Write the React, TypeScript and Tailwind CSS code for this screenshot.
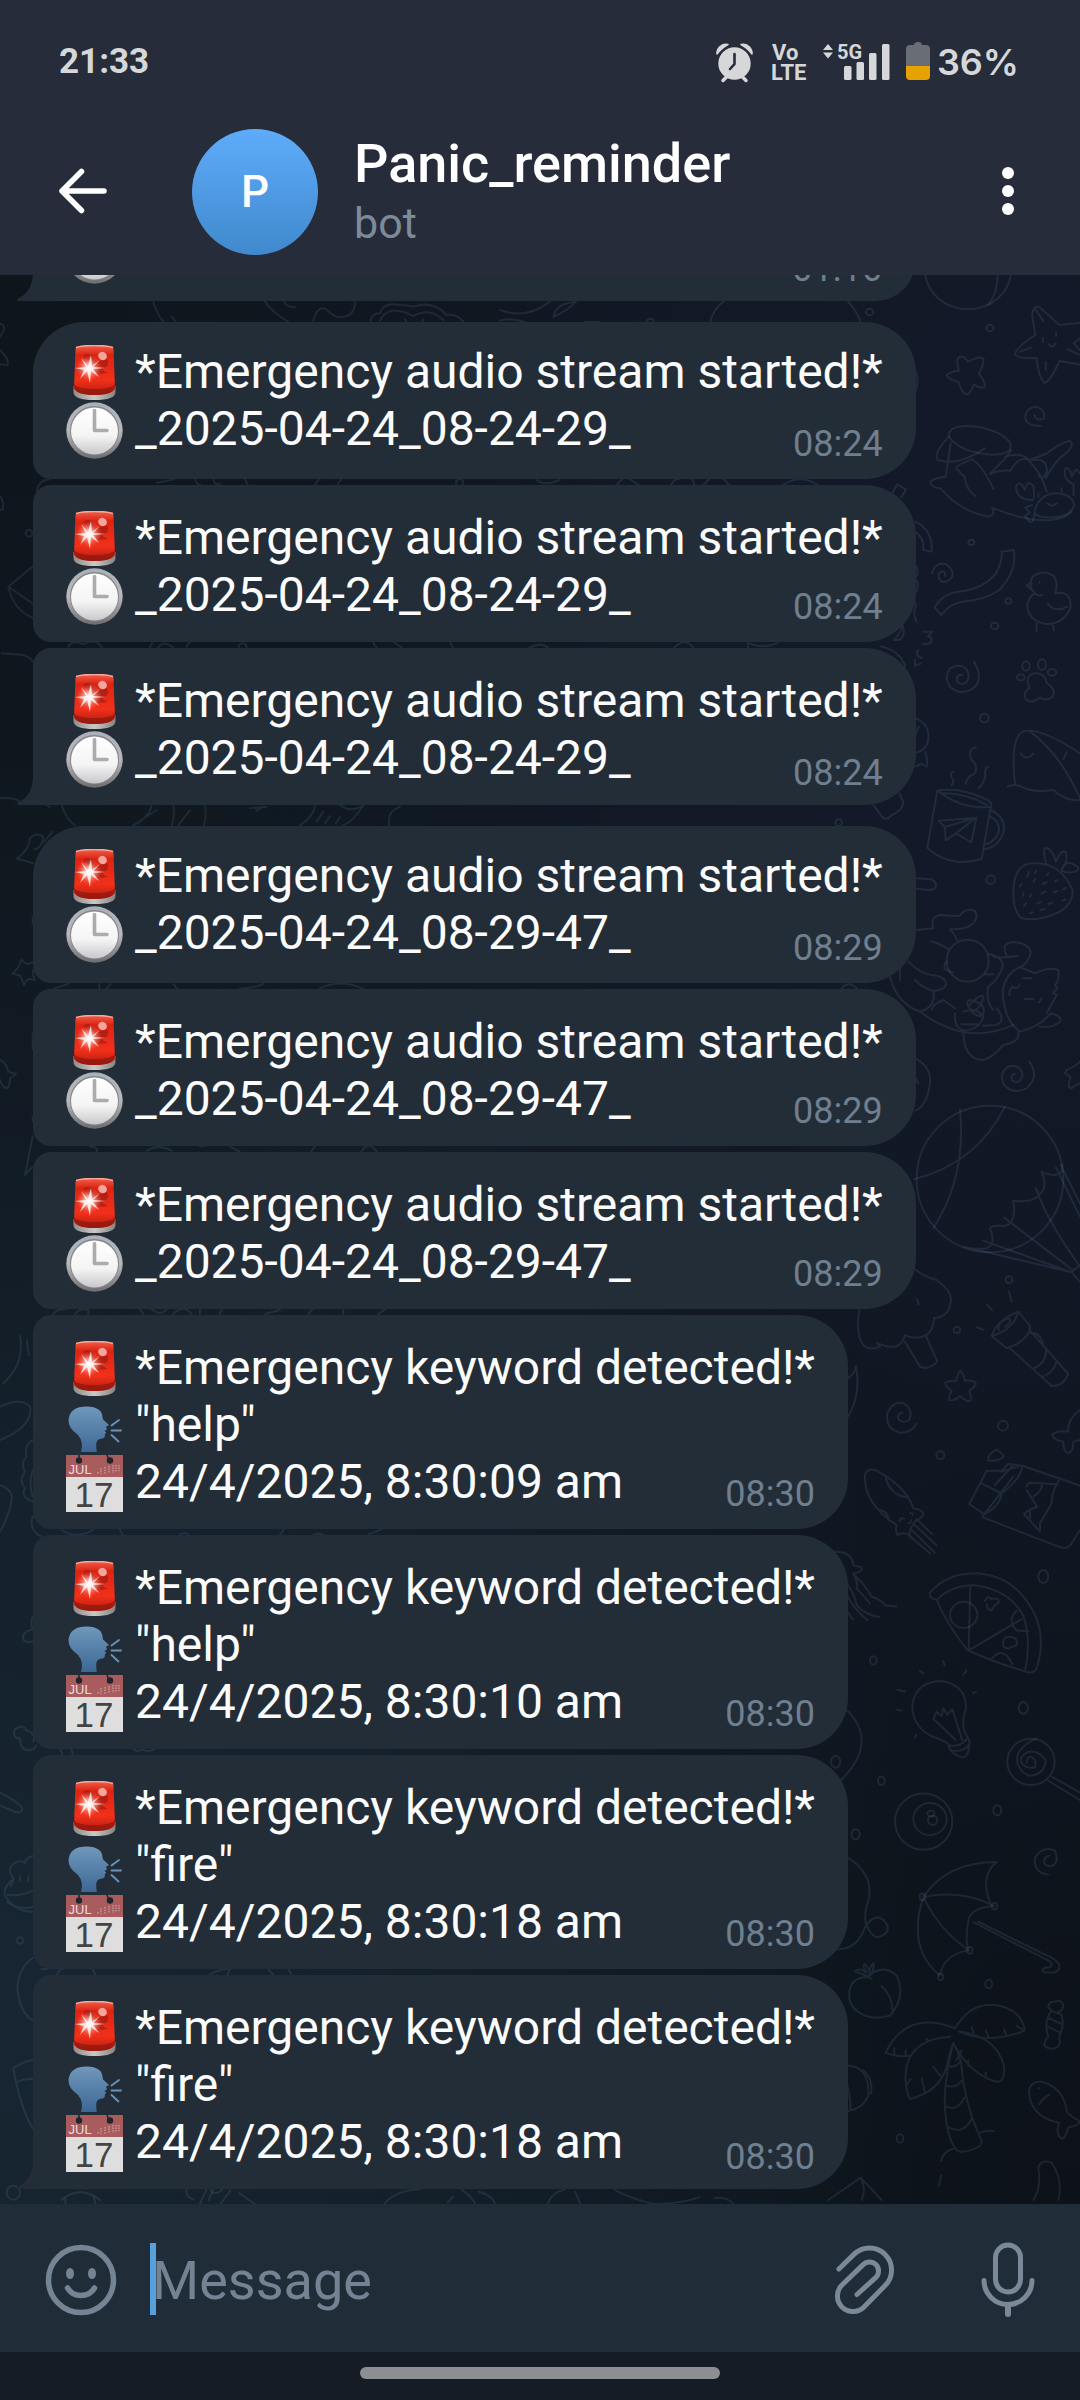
import type { ReactNode } from "react";

type Glyph = "siren" | "clock" | "speaker" | "calendar";
type Line = { glyph: Glyph; text: string };
type Message = { lines: Line[]; time: string; first?: boolean; last?: boolean };

const stream = (stamp: string): Line[] => [
  { glyph: "siren", text: "*Emergency audio stream started!*" },
  { glyph: "clock", text: stamp },
];

const keyword = (word: string, date: string): Line[] => [
  { glyph: "siren", text: "*Emergency keyword detected!*" },
  { glyph: "speaker", text: `"${word}"` },
  { glyph: "calendar", text: date },
];

const messages: Message[] = [
  { lines: stream("_2025-04-24_08-24-29_"), time: "08:24", first: true },
  { lines: stream("_2025-04-24_08-24-29_"), time: "08:24" },
  { lines: stream("_2025-04-24_08-24-29_"), time: "08:24", last: true },
  { lines: stream("_2025-04-24_08-29-47_"), time: "08:29", first: true },
  { lines: stream("_2025-04-24_08-29-47_"), time: "08:29" },
  { lines: stream("_2025-04-24_08-29-47_"), time: "08:29" },
  { lines: keyword("help", "24/4/2025, 8:30:09 am"), time: "08:30" },
  { lines: keyword("help", "24/4/2025, 8:30:10 am"), time: "08:30" },
  { lines: keyword("fire", "24/4/2025, 8:30:18 am"), time: "08:30" },
  { lines: keyword("fire", "24/4/2025, 8:30:18 am"), time: "08:30", last: true },
];

function EmojiDefs() {
  return (
    <svg className="absolute size-0" aria-hidden="true">
      <defs>
        <linearGradient id="sirenRed" x1="0" y1="0" x2="0" y2="1">
          <stop offset="0" stopColor="#f0604a" />
          <stop offset="0.2" stopColor="#dc2413" />
          <stop offset="0.7" stopColor="#f2301a" />
          <stop offset="1" stopColor="#b01c10" />
        </linearGradient>
        <radialGradient id="sirenGlow">
          <stop offset="0" stopColor="#ffffff" />
          <stop offset="0.4" stopColor="#ffb9ae" stopOpacity="0.75" />
          <stop offset="1" stopColor="#ff5a40" stopOpacity="0" />
        </radialGradient>
        <linearGradient id="sirenBase" x1="0" y1="0" x2="1" y2="0">
          <stop offset="0" stopColor="#8f8d8a" />
          <stop offset="0.5" stopColor="#cbc9c5" />
          <stop offset="1" stopColor="#858380" />
        </linearGradient>
        <linearGradient id="clockRim" x1="0" y1="0" x2="0" y2="1">
          <stop offset="0" stopColor="#a9b0b8" />
          <stop offset="0.5" stopColor="#b9b9bb" />
          <stop offset="1" stopColor="#6d6d6f" />
        </linearGradient>
        <linearGradient id="clockFace" x1="0" y1="0" x2="0" y2="1">
          <stop offset="0" stopColor="#ffffff" />
          <stop offset="0.6" stopColor="#f4f4f5" />
          <stop offset="1" stopColor="#c9c9cc" />
        </linearGradient>
        <linearGradient id="headBlue" x1="0" y1="0" x2="0" y2="1">
          <stop offset="0" stopColor="#7098bb" />
          <stop offset="1" stopColor="#3d6796" />
        </linearGradient>
      </defs>
    </svg>
  );
}

function Emoji({ glyph }: { glyph: Glyph }) {
  const drawings: Record<Glyph, ReactNode> = {
    siren: (
      <g transform="translate(0 -2)">
        <path d="M7.500 43 h42 v6 q0 8 -21 8 t-21 -8z" fill="url(#sirenBase)" />
        <path d="M9.500 6 q0-4 19-4 t19 4 l1.500 39 q-2 7 -20.500 7 t-20.500 -7z" fill="url(#sirenRed)" />
        <path d="M8.200 41 q3 5 20.300 5 t20.300 -5 v4 q-3 7 -20.300 7 t-20.300 -7z" fill="#8e170f" opacity="0.7" />
        <path d="M10 4.500 q6-2 18.500-2 t18.500 2" stroke="#f9a79a" strokeWidth="1.500" fill="none" />
        <path d="M17 13 q5-4 9 0 l5 6 10 -3 q4 6 -5 11 l6 3 -10 1z" fill="#8f1710" opacity="0.55" />
        <ellipse cx="36.500" cy="13" rx="4.500" ry="4" fill="#f3a69e" transform="rotate(30 36.500 13)" />
        <circle cx="23" cy="25" r="13" fill="url(#sirenGlow)" />
        <path d="M9 25 l11-1 -5-9 7 8 3-11 1 11 8-6 -7 7 13 1 -13 1 6 8 -8 -6 -1 12 -3 -12 -7 8 4-9z" fill="#fff" opacity="0.8" />
      </g>
    ),
    clock: (
      <>
        <circle cx="28.500" cy="28.500" r="28.200" fill="url(#clockRim)" />
        <circle cx="28.500" cy="28.500" r="24.500" fill="#85868a" />
        <circle cx="28.500" cy="29" r="23.500" fill="url(#clockFace)" />
        <path d="M28.500 8.500 v20 h12.500" stroke="#abacae" strokeWidth="3.600" strokeLinecap="round" strokeLinejoin="round" fill="none" />
      </>
    ),
    speaker: (
      <g transform="translate(0 -1)">
        <path d="M15 55 q3-10-3-17 Q2 31 2.500 22.500 Q4 9.500 21 9.500 Q36 10 36.500 20 l.5 2.500 5.500 5 q.5 1.500 -2.500 1.800 l1 3 -2.500 1.700 1.800 1.500 -1.500 2 q1 4 -5 4.500 q-5 .5 -3 13z" fill="url(#headBlue)" />
        <path d="M45.500 28.500 l7.500-5.500 M45.500 33.500 h9.500 M45.500 38 l7 6.500" stroke="#6795bd" strokeWidth="1.800" strokeLinecap="round" fill="none" />
      </g>
    ),
    calendar: (
      <>
        <path d="M0 0 h57 v57 h-57z" fill="#dededf" />
        <path d="M0 0 h57 v22 h-57z" fill="#a95c5d" />
        <path d="M13 0 l0 5 M41 0 l2 5" stroke="#1e252e" strokeWidth="1.500" />
        <circle cx="13" cy="5.500" r="3.200" fill="#1e252e" />
        <circle cx="44" cy="5.500" r="3.200" fill="#1e252e" />
        <path d="M32 17 v2 M35 13 v6 M39 12 v7 M43 11 v7 M47 10 v8 M50 10 v7 M53 10 v6" stroke="#c99393" strokeWidth="1.500" strokeDasharray="1.500 1" />
        <text x="2.500" y="19" fontSize="13" fill="#eedede" fontFamily="Liberation Sans, sans-serif">JUL</text>
        <text x="28" y="51.500" fontSize="35" fill="#444444" textAnchor="middle" fontFamily="Liberation Sans, sans-serif">17</text>
      </>
    ),
  };
  return (
    <svg viewBox="0 0 57 57" className="mt-1 size-[57px] shrink-0" aria-hidden="true">
      {drawings[glyph]}
    </svg>
  );
}

function Tail() {
  return (
    <svg viewBox="0 0 17 30" className="absolute bottom-0 -left-4 h-[30px] w-[17px]" aria-hidden="true">
      <path d="M17 0 H16 Q16 20 2 27 Q-1 29 1 30 H17z" fill="#222d38" />
    </svg>
  );
}

function Bubble({ message }: { message: Message }) {
  const { lines, time, first, last } = message;
  return (
    <li
      className={`relative grid w-fit rounded-r-[51px] bg-[#222d38] px-[33px] ${first ? "mt-[15px] rounded-tl-[51px]" : "rounded-tl-[18px]"} ${last ? "" : "rounded-bl-[18px]"}`}
    >
      <div className={`col-start-1 row-start-1 ${first ? "pt-[21px] pb-[22px]" : "pt-6 pb-[19px]"}`}>
        {lines.map((line) => (
          <p key={line.glyph} className="flex h-[57px] items-center gap-3 text-5xl leading-[57px] whitespace-nowrap text-[#fbfbfc]">
            <Emoji glyph={line.glyph} />
            {line.text}
          </p>
        ))}
      </div>
      <time className={`col-start-1 row-start-1 self-end justify-self-end text-4xl leading-[42px] text-[#6f7f8f] ${last ? "mb-[11px]" : "mb-[14px]"}`}>
        {time}
      </time>
      {last && <Tail />}
    </li>
  );
}

/* The lower edge of an older message that is scrolled out of view. */
function ScrolledBubble({ time }: { time: string }) {
  return (
    <li className="relative flex h-[78px] w-[882px] max-w-full items-end justify-between rounded-r-[51px] bg-[#222d38] px-[33px]">
      <span className="mb-[17px]">
        <Emoji glyph="clock" />
      </span>
      <time className="mb-[11px] text-4xl leading-[42px] text-[#6f7f8f]">{time}</time>
      <Tail />
    </li>
  );
}

function Doodles() {
  return (
    <svg
      viewBox="0 275 1080 1929"
      preserveAspectRatio="xMaxYMin slice"
      className="absolute inset-0 size-full [&_*]:[vector-effect:non-scaling-stroke]"
      fill="none"
      stroke="#7b9bbd"
      strokeOpacity="0.14"
      strokeWidth="2"
      strokeLinecap="round"
      strokeLinejoin="round"
      aria-hidden="true"
    >
      <g transform="translate(500 260) scale(.37 .3333)">
        <ellipse cx="1265" cy="30" rx="116" ry="118" />
        <path d="M1345 40 Q1345 100 1320 135" />
        <path d="M1580 188 Q1545 190 1512 195 L1460 143 Q1442 132 1438 165 L1447 225 Q1395 262 1392 282 Q1395 297 1450 293 Q1455 350 1470 368 Q1485 370 1512 303 L1580 316 M1580 285 L1550 250 L1580 225 M1447 148 l22 36 M1405 275 l30 -12 M1475 305 v25 M1535 268 l30 16 M1483 253 q11 14 18 -2 M1467 233 v12 M1503 216 v12" />
        <path d="M1240 292 Q1252 283 1265 305 Q1300 285 1307 297 Q1306 320 1294 340 Q1318 375 1308 382 Q1292 385 1280 373 Q1272 405 1258 403 Q1244 390 1240 367 Q1205 355 1208 343 Q1225 332 1240 332 Q1232 300 1240 292z" />
        <path d="M1462 497 Q1420 500 1419 468 Q1425 440 1450 440 Q1475 450 1470 475 Q1450 486 1444 465 M1168 940 Q1175 905 1205 912 Q1228 930 1222 950 Q1210 970 1192 964 Q1178 945 1192 935 Q1205 932 1203 948" />
        <ellipse cx="1297" cy="541" rx="86" ry="38" transform="rotate(15 1297 541)" />
        <path d="M1213 530 Q1170 580 1183 600 Q1240 620 1310 565 M1218 550 L1205 645 M1382 570 L1362 600 L1325 640 M1275 598 Q1235 615 1232 625 L1255 650 Q1260 690 1285 708 M1275 598 Q1300 610 1334 687 M1205 650 Q1165 655 1163 668 Q1165 682 1190 685 Q1245 755 1320 770 Q1340 765 1330 743 Q1420 785 1490 780 Q1530 775 1545 755 M1325 643 Q1345 630 1380 632 Q1400 590 1425 598 Q1465 640 1478 695 M1365 590 Q1410 575 1430 600 L1475 582 Q1520 545 1540 543 Q1555 555 1530 580 Q1500 600 1475 655 M1430 602 Q1480 590 1478 635 Q1470 660 1455 648" />
        <path d="M1445 755 Q1455 705 1500 700 Q1545 700 1552 735 Q1540 775 1480 772 Q1445 770 1445 755z M1440 720 Q1395 720 1395 680 Q1405 655 1418 690 Q1428 655 1442 680 Q1445 715 1440 720 M1455 712 v-12 M1518 695 v-10 M1545 670 Q1520 655 1528 625 Q1540 620 1545 650 Q1560 615 1565 640 M1550 672 V705 M1438 735 l-18 8 12 15 -14 10 14 18 8 -2 4 -22 M1480 730 q12 14 25 0" />
        <path d="M1355 875 L1388 870 Q1400 930 1350 990 Q1310 1020 1250 1025 Q1210 1035 1193 1065 L1175 1043 Q1195 1000 1240 995 Q1310 985 1340 940 Q1360 900 1355 875 M1122 785 Q1170 810 1167 875 L1143 870 Q1150 840 1122 815 M1060 700 L1073 673 L1097 688 L1085 712" />
        <path d="M1445 1000 Q1425 975 1440 950 Q1470 925 1498 950 Q1510 975 1500 1000 Q1545 990 1542 1045 Q1520 1095 1475 1092 Q1425 1080 1425 1035 Q1430 1010 1445 1000 Q1455 1010 1465 1005 M1437 970 l-14 6 14 14 M1480 1030 Q1500 1060 1533 1040 M1450 1090 v22 M1493 1090 l4 22 M1458 966 v2" />
        <path d="M1122 915 q14 20 0 40 q14 20 2 40 q-10 20 0 40 q-10 30 2 50 M1065 1140 Q1090 1110 1085 1090 Q1100 1120 1080 1140z M1145 1115 h24 q-14 14 -12 14 q20 8 0 24 l-14 -2 M1030 1160 Q1060 1165 1085 1195 M1130 1170 q-10 18 10 24 M1122 330 Q1135 360 1122 400" />
        <circle cx="999" cy="156" r="10" /><circle cx="1324" cy="204" r="10" /><circle cx="1274" cy="847" r="8" />
        <circle cx="1374" cy="1023" r="8" /><circle cx="1337" cy="1098" r="10" /><circle cx="406" cy="186" r="10" />
        <path d="M568 186 Q575 150 605 123 M940 123 Q965 155 975 186 M0 150 Q70 180 135 125 M145 170 Q150 130 205 125 Q180 155 145 170 M0 182 Q30 172 65 186 M230 186 h36 M100 660 Q120 680 160 660 M315 675 L330 657 M350 657 L375 675 M463 675 Q470 655 485 657 M520 657 l5 18 M550 675 l16-18 M605 657 l14 18 M765 675 Q810 640 860 675 M80 1163 Q110 1145 130 1163 M470 1163 Q500 1130 522 1163 M670 1163 v-16 Q710 1170 752 1147" />
      </g>
      <g transform="translate(0 300) scale(.3333)">
        <path d="M460 5 Q470 40 490 65 M515 50 l12 15 M795 5 Q820 40 865 65 M850 0 Q860 25 885 20 M940 62 Q950 20 975 25 Q1000 50 1020 52 Q1065 50 1065 5 M1112 62 Q1115 40 1140 40 Q1150 5 1200 15 Q1225 15 1240 20 Q1300 0 1340 45 Q1370 40 1390 65 M1140 62 Q1165 10 1240 48 Q1290 20 1330 60 M1215 58 l4 8 M1270 58 l-4 8" />
        <path d="M0 70 Q15 75 12 90 L0 110 M0 150 Q30 180 22 195 L0 193 M0 590 Q12 600 8 628 L0 630 M100 798 L25 860 Q40 930 100 955 M25 860 L100 912 M110 575 Q115 540 150 538 M470 548 q30 -5 52 -10 M585 538 Q590 555 605 556 M640 538 q4 20 20 12 M735 538 l8 16 M945 554 l12-16 M1012 554 l12-16" />
        <path d="M5 1060 L70 1065 Q95 1075 98 1085 M205 1042 Q210 1020 250 1032 Q290 1015 305 1042 M450 1042 l8-16 M475 1042 Q490 1020 520 1042 M560 1040 q3-10 12-14 M1120 1026 q3 12 10 16 M1180 1026 l25 16 M1350 1026 q6 14 10 16" />
        <circle cx="87" cy="700" r="10" /><circle cx="728" cy="1042" r="12" /><circle cx="1379" cy="548" r="11" />
      </g>
      <g transform="translate(0 780) scale(.3333)">
        <path d="M0 55 Q40 50 60 65 M185 75 Q200 120 225 136 M135 72 l14 9 M400 136 Q440 110 470 90 M455 75 Q450 110 400 136 M520 75 Q525 110 515 136 M570 90 L535 136 M615 75 Q620 110 612 136 M750 85 l50 -5 M770 92 l20 -12 M900 136 Q940 110 945 78 M1020 75 Q1050 100 1090 76 Q1060 125 1030 136 M970 95 l-20 30 M990 108 l-14 22 M1020 110 l-12 20 M1200 80 Q1160 95 1168 136" />
        <path d="M98 250 L50 235 Q85 215 90 175 Q110 155 130 170 Q125 205 105 208 M158 155 L130 188 M98 410 v22 M65 540 Q80 560 102 545 M100 570 q-5 10 5 30 Q80 590 72 615 L62 588 L38 580 L55 562 L65 538 M0 840 Q20 850 25 875 L48 882 L30 895 Q30 920 20 925 Q5 920 0 900 M98 1010 v12 M98 1070 L75 1185 L98 1160 M98 760 v48" />
        <path d="M160 626 L205 612 M298 626 v-14 M320 626 l12-14 M520 612 l12 14 M720 626 Q760 625 790 612 M960 625 Q1020 595 1090 626 M270 1100 q25 0 20 14 M440 1112 Q475 1090 515 1112 M600 1100 l20 -4 M690 1100 l28 14 M935 1114 l10-16 M1085 1114 Q1105 1080 1130 1114" />
      </g>
      <g transform="translate(0 1300) scale(.3333)">
        <path d="M60 108 Q75 190 10 250 M82 120 q-2 25 6 45 M0 320 Q60 290 90 320 Q100 380 0 420 M0 555 Q40 570 35 600 Q30 640 0 695 M98 420 Q70 440 80 470 Q60 490 75 515 Q55 540 75 565 Q60 590 98 605 M98 650 Q85 690 125 710 M98 510 Q85 550 98 590" />
        <path d="M160 42 q12-16 40-14 M225 42 q15-20 40-12 v12 M420 28 l10 14 M455 28 Q480 50 500 28 M520 42 Q550 10 575 42 M600 28 v14 M660 42 l5-14 M795 42 l45-12 M925 42 l12-14 M1030 28 v14 M1135 42 l20-14 M185 690 Q230 720 280 690 M360 690 l8 14 M540 704 q15-10 25 0 M840 704 l12-16 M940 704 q15-5 28 0 M1105 704 l40-16" />
      </g>
      <g transform="translate(0 1560) scale(.3333 .4082)">
        <path d="M98 140 Q90 155 98 170 Q65 175 70 195 Q80 205 100 200 M100 445 Q110 425 80 418 Q70 400 45 415 Q35 435 60 437 Q60 465 85 466 Q105 465 108 455 M0 570 Q60 595 68 610 Q60 625 40 615 L0 602 M98 725 Q75 730 75 742 Q50 730 30 755 Q30 775 42 780 Q10 800 14 820 Q40 860 98 862 M42 780 L32 798 M22 820 Q60 825 98 810 M22 838 Q60 858 98 850 M60 775 v10 M85 775 v12 M98 975 Q55 1000 52 1050 Q60 1110 98 1128 M98 1225 Q65 1230 40 1245 Q60 1340 98 1392 M52 1278 Q75 1270 98 1272" />
        <path d="M180 464 l8 14 M215 464 l4 14 M400 464 q14 8 28 0 q18 8 34 0 M125 1002 h18 M170 1016 q8-14 18-14 M278 1002 l8 14 M628 1016 Q660 1000 690 1002 L682 1016 M805 1002 l14 14 M865 1002 l8 12 M560 1542 Q555 1560 580 1566 M640 1542 l-14 26 M184 1568 Q240 1530 300 1568" />
        <ellipse cx="60" cy="932" rx="10" ry="8" /><ellipse cx="40" cy="1550" rx="20" ry="17" />
      </g>
      <g transform="translate(800 660) scale(.3333)">
        <path d="M522 5 Q555 60 515 88 Q480 108 450 80 Q430 50 450 25 Q480 8 500 28 Q515 55 495 70 Q470 75 470 55 Q475 42 487 45 M345 0 v18 l18 -8 M305 0 q14 14 10 25" />
        <path d="M682 60 Q685 40 710 40 Q735 40 740 68 Q770 90 758 110 Q740 125 720 113 Q690 135 676 115 Q670 95 688 85z" />
        <ellipse cx="678" cy="18" rx="11" ry="14" /><ellipse cx="726" cy="14" rx="12" ry="16" /><ellipse cx="662" cy="52" rx="12" ry="9" /><ellipse cx="756" cy="37" rx="13" ry="10" />
        <path d="M645 372 Q630 230 670 214 Q720 200 840 280 M690 214 Q780 280 840 415 M622 380 Q640 370 665 380 Q700 400 760 390 Q800 425 840 420 M662 280 q18 25 38 0 M800 276 l-10 22" />
        <path d="M345 175 Q390 190 385 240 Q380 270 345 280 M375 275 q10 20 5 45 l-15-8 -20 8 M345 225 l12 -25" />
        <path d="M412 392 L382 563 Q450 625 545 597 L572 440 M412 392 Q480 380 560 418 Q590 440 560 442 Q480 445 412 392 M430 400 Q500 400 560 435 M572 450 Q615 470 612 510 Q600 560 553 568 M572 470 Q605 490 595 520 Q580 550 556 552 M416 482 L529 473 L514 547 L468 520 L437 540 L435 503z M529 473 L437 500 M529 473 L468 520 L440 540 M455 375 Q465 365 455 352 Q448 342 460 335 M497 372 Q500 350 525 340 Q535 315 515 300 Q500 270 528 262 M537 384 Q560 360 555 335 q0 -12 10 -14" />
        <path d="M640 700 Q640 610 700 610 Q780 605 818 690 Q820 730 780 755 Q720 785 665 775 Q640 755 640 700z M740 615 Q725 565 740 563 Q760 575 768 605 Q785 565 798 578 Q805 605 785 630 Q790 605 815 610 Q850 625 825 635 Q800 642 785 632 M682 650 l5 -14 M705 640 l4 -8 M740 645 l6 -5 M665 672 l-5 8 M700 665 l6-8 M727 672 l12 -5 M765 665 l8-5 M668 708 l3 -10 M690 710 l5-8 M725 700 l12-5 M760 698 l12-5 M790 688 l8-5 M672 738 l7-8 M712 730 l10-4 M745 732 l12-4 M788 722 l8-4 M690 760 l8-3 M722 750 l12-3" />
        <path d="M350 810 L400 805 Q390 770 420 765 Q450 768 478 768 Q495 745 520 750 Q540 765 520 790 Q500 810 450 808 Q470 830 470 840 M392 844 Q420 850 445 868 M565 882 Q610 890 608 920 Q595 960 565 980 Q555 1020 580 1050 M555 943 h25 M580 890 Q600 895 655 887 M620 885 Q600 850 640 846 Q690 850 692 880 Q685 910 660 922 Q620 935 608 990 Q610 1080 660 1115 Q720 1100 752 1060 Q790 1070 780 1085 Q760 1105 720 1100 M660 922 L705 940 Q750 920 775 930 Q780 960 765 975 L773 985 L758 998 L770 1005 L740 1060 M670 955 h25 M675 1017 h25 M725 1015 l-8 12 M658 975 q-5 15-20 5 q-15 15-8 25 M440 905 Q420 930 460 938" />
        <path d="M325 905 Q360 940 395 945 Q440 950 438 975 Q430 990 400 993 Q410 1040 360 1055 Q290 1030 270 950 M345 960 Q370 985 400 993 M300 915 v45 M395 1050 Q400 1030 430 1020 L465 1045 M360 1055 Q500 1160 640 1095 M465 1060 Q460 1100 490 1112 Q540 1110 550 1070 Q530 1040 490 1055 M490 1112 Q490 1195 545 1200 Q570 1200 610 1155 Q660 1145 655 1120 M510 1035 Q540 1000 550 1010 Q545 1040 520 1055 Q490 1030 510 1020 Q560 1030 550 1060 Q540 1080 510 1050 M590 1045 Q620 1080 590 1095 L548 1097 M485 1093 h50" />
        <circle cx="503" cy="902" r="63" />
        <path d="M345 655 L395 658 Q415 670 405 685 Q395 695 345 685 M220 435 L250 475 Q265 480 275 465 Q310 450 310 425 L298 400 M345 1195 Q395 1220 390 1270 Q380 1340 345 1352 M345 1250 l10 20 M125 985 q20 -25 45 0" />
        <path d="M688 1205 Q720 1250 680 1285 Q640 1305 612 1275 Q595 1240 625 1220 Q660 1210 668 1245 Q660 1275 637 1262 Q630 1245 645 1242 M840 1205 Q825 1220 800 1230 L795 1240 L812 1252 Q800 1285 815 1285 Q825 1275 840 1270" />
        <circle cx="553" cy="174" r="13" /><circle cx="572" cy="659" r="13" /><circle cx="116" cy="488" r="10" />
      </g>
      <g transform="translate(800 1080) scale(.3333)">
        <circle cx="570" cy="297" r="220" />
        <path d="M480 88 Q500 290 400 445 M615 80 Q530 250 342 298 M788 255 Q790 285 760 285 Q730 280 725 275 Q745 320 720 342 Q700 370 640 362 Q650 430 615 438 Q575 435 570 445 Q590 490 560 505 Q530 510 490 500 M768 262 L840 410 M782 255 L840 370 M708 325 Q740 420 840 560 M613 413 L820 572 M550 482 L815 577 L490 500 M815 577 L840 555 M815 577 L840 605" />
        <path d="M345 568 Q370 590 410 600 Q465 640 450 675 Q445 710 402 715 Q400 765 360 772 Q330 775 315 765 Q300 820 235 790 M230 788 L240 800 Q190 820 178 770 Q170 730 178 690 M315 785 L360 860 Q385 872 412 845 L378 768 M350 658 q8 5 4 15" />
        <path d="M575 768 Q590 720 655 695 L690 738 Q690 780 620 805z M575 768 Q640 750 655 695 M597 752 Q590 725 625 715 Q640 720 615 742 M630 805 L755 918 Q790 920 805 882 L690 752 M693 760 Q720 755 730 795 M738 808 Q740 850 700 865 M768 848 Q760 880 727 890 M627 635 l8 30 M562 675 l14 15 M530 742 l20 7" />
        <path d="M482 872 Q490 880 495 902 Q525 900 528 912 Q520 925 508 933 Q518 960 508 964 Q495 962 480 948 Q460 965 448 960 Q445 950 455 933 Q435 920 436 908 Q450 900 468 903 Q475 875 482 872z M350 1030 Q335 1060 300 1058 Q255 1045 262 1000 Q280 962 310 970 Q340 985 328 1020 Q310 1032 295 1018 Q290 1000 307 998" />
        <path d="M195 1185 Q200 1165 225 1170 Q320 1220 340 1285 Q370 1290 370 1303 Q360 1320 350 1318 Q325 1350 330 1365 Q310 1355 292 1365 Q285 1350 290 1335 Q190 1270 195 1185 M258 1195 Q270 1245 320 1252 M235 1290 Q265 1290 265 1322 M350 1318 L397 1363 M345 1335 L410 1397 M335 1350 L405 1418 M325 1365 L390 1420 M298 1325 q5-15 15 -8 M325 1330 q8 2 8 -10 M330 1300 q8 -4 8 5" />
        <path d="M508 1273 L560 1172 L605 1172 L625 1152 L670 1158 L840 1217 M508 1273 L548 1300 L548 1312 L775 1400 Q800 1410 812 1395 L840 1350 M548 1305 Q600 1280 605 1240 Q660 1200 668 1158 M605 1175 L655 1160 M545 1210 L600 1238 M585 1215 L640 1155 M640 1190 L555 1300 M680 1220 Q680 1208 695 1208 L770 1213 Q755 1240 755 1270 L720 1330 V1355 L672 1302 Q690 1285 712 1282 L680 1230 M700 1250 Q730 1230 725 1210 M690 1290 v25 M565 1142 Q560 1125 590 1108 L612 1128 Q600 1145 565 1142z M780 1195 L770 1215" />
        <path d="M840 990 Q800 1020 805 1055 Q770 1050 757 1065 Q760 1080 790 1085 Q790 1115 805 1120 Q820 1115 820 1085 L840 1080 M138 898 Q165 885 168 858 Q185 950 138 1020" />
        <circle cx="627" cy="599" r="10" /><circle cx="471" cy="750" r="10" /><circle cx="609" cy="1037" r="15" /><circle cx="421" cy="1126" r="12" />
      </g>
      <g transform="translate(800 1540) scale(.3333 .4209)">
        <path d="M100 28 Q155 25 160 60 L185 65 Q190 75 160 80 Q175 100 170 115 Q200 140 210 152 M160 82 Q190 100 215 135 Q240 140 255 155 L290 158 M138 100 Q165 130 170 155 Q200 180 238 183 M138 125 Q155 160 203 191 M138 165 l20 23" />
        <path d="M390 125 Q440 80 520 79 Q640 80 700 170 Q740 230 710 305 Q700 320 675 312 Q580 290 503 262 Q440 200 410 142 Q385 138 390 125 M410 142 Q460 105 530 108 Q630 120 670 180 Q695 240 675 312 M511 110 L506 262 L665 188 M555 145 Q560 130 575 140 Q600 135 595 150 Q580 155 575 168 Q560 165 560 152 M610 245 Q610 230 628 230 Q655 230 650 250 Q630 255 625 258 Q605 255 610 245 M650 168 Q620 190 650 215 L685 217 M575 282 Q610 250 637 295" />
        <ellipse cx="491" cy="178" rx="41" ry="31" />
        <path d="M445 485 Q430 475 400 468 Q335 445 337 390 Q350 335 425 335 Q500 345 498 400 Q480 440 500 465 L508 475 Q510 510 490 517 Q450 510 445 485 M445 487 Q480 495 503 470 M455 500 Q490 505 508 485 M467 475 L400 425 L410 408 L425 418 L430 400 L442 415 L457 402 L487 475 M429 288 l5 10 M360 311 l10 6 M490 320 l10 -10 M519 364 l9-3 M292 356 l23 4 M290 403 l15 2 M345 469 l4-6" />
        <path d="M138 402 Q240 480 120 573 M745 572 L840 618 M755 562 L840 600 M680 530 Q680 515 695 515 Q712 525 705 540 Q680 545 665 530 Q655 515 685 503 Q720 500 738 525 Q730 560 685 560 Q640 540 655 505 Q680 480 710 472" />
        <ellipse cx="693" cy="527" rx="71" ry="55" />
        <ellipse cx="371" cy="669" rx="86" ry="67" /><ellipse cx="390" cy="663" rx="50" ry="38" /><ellipse cx="393" cy="650" rx="11" ry="7" /><ellipse cx="398" cy="666" rx="14" ry="11" />
        <path d="M745 795 Q700 790 705 755 Q730 725 765 738 Q780 765 755 775 Q725 775 735 755 L748 750" />
        <path d="M370 848 Q440 765 590 765 Q535 800 575 870 Q510 875 505 905 Q495 950 505 975 Q430 985 420 1035 Q320 970 370 848 M370 848 Q490 830 582 870 M370 848 Q420 930 508 975 M520 908 L735 995 Q765 1005 750 1015 Q725 1015 727 1025 Q780 1035 778 1010 Q770 995 730 983 L535 907" />
        <circle cx="367" cy="848" r="8" /><circle cx="584" cy="870" r="8" /><circle cx="510" cy="975" r="8" /><circle cx="422" cy="1038" r="8" />
        <path d="M138 752 Q220 790 207 850 Q190 890 198 912 Q215 945 235 944 Q270 935 262 915 Q240 885 210 905 Q195 915 190 930 Q165 975 108 972" />
        <path d="M148 1085 Q145 1040 200 1038 Q250 1005 290 1035 Q320 1085 270 1130 Q230 1140 195 1130 Q150 1115 148 1085 M245 1060 Q280 1085 278 1125 M215 1043 Q190 1030 165 1025 Q180 1015 200 1028 Q185 1010 195 1007 Q210 1020 208 1035 Q210 1010 220 1005 Q225 1020 210 1035 M138 1248 Q210 1250 205 1320 Q190 1350 150 1355 M190 1260 Q220 1280 213 1315 M138 1285 Q155 1330 150 1355 L138 1362" />
        <path d="M465 1160 Q510 1100 580 1105 Q660 1110 675 1165 Q570 1200 477 1168 M465 1160 Q320 1115 257 1218 Q290 1230 335 1225 M450 1180 Q340 1185 320 1250 Q310 1295 330 1328 Q420 1310 440 1250 Q450 1215 460 1195 M480 1168 Q590 1180 612 1250 Q615 1290 590 1287 Q510 1270 460 1195 Q430 1290 435 1350 Q440 1420 470 1450 Q490 1460 540 1440 Q550 1425 540 1420 Q490 1330 483 1240 Q475 1215 460 1195 M447 1250 Q465 1255 480 1240 M437 1295 Q465 1305 485 1285 M437 1345 Q470 1360 493 1325 M445 1395 Q490 1415 515 1375 M283 1207 v14 M317 1212 v12 M378 1185 l8 6 M320 1295 l12 -14 M365 1280 l10 32 M400 1252 l22 22 M515 1158 l6 12 M557 1165 l8 14 M612 1163 l8 15 M650 1155 l22 10 M505 1235 v14 M557 1265 v12 M470 1235 l15-22 M535 1410 Q560 1400 582 1405 M465 1445 Q430 1450 424 1475 M424 1510 l-8 25" />
        <path d="M745 1110 Q745 1095 765 1097 Q785 1090 790 1105 Q788 1120 775 1120 Q800 1140 778 1180 Q785 1205 762 1208 Q740 1210 733 1200 Q735 1185 745 1180 Q730 1145 755 1117z M745 1135 l40 15 M740 1155 l40 15 M758 1120 l28 8" />
        <path d="M800 1355 Q800 1365 838 1380 Q840 1392 805 1395 Q795 1425 785 1422 Q765 1410 778 1385 Q690 1370 687 1310 Q690 1285 725 1287 Q790 1300 800 1355z M718 1340 Q730 1325 748 1318 M716 1302 v2 M700 1568 Q725 1540 715 1490 Q725 1470 755 1480 Q790 1520 775 1568 M85 1568 L182 1515 L245 1568 M182 1515 Q200 1540 185 1568" />
        <circle cx="730" cy="87" r="15" /><circle cx="220" cy="286" r="10" /><circle cx="670" cy="399" r="14" /><circle cx="107" cy="527" r="14" />
        <circle cx="244" cy="572" r="10" /><circle cx="592" cy="642" r="12" /><circle cx="167" cy="699" r="12" /><circle cx="566" cy="1055" r="10" /><circle cx="300" cy="1422" r="10" />
      </g>
      <g transform="translate(0 2080) scale(.3444 .3333)">
        <path d="M190 355 v15 M272 350 l5 20 M600 328 L580 372 M610 330 Q625 350 645 328 M670 330 L640 372 M695 340 L740 372 M1115 372 Q1150 330 1220 328 M1340 328 Q1370 350 1380 372 M1390 335 Q1430 345 1438 372 M1315 350 l-15 18 M1590 372 Q1600 340 1640 328 M1670 335 l15 35 M1785 330 Q1840 360 1900 372 Q1980 370 2030 352 M2075 354 Q2110 350 2130 372" />
      </g>
    </svg>
  );
}

function StatusBar() {
  return (
    <div className="flex items-center pt-10 pr-[61px] pl-[59px] text-[#d6d7d9]">
      <span className="text-[35px] leading-[44px] font-bold">21:33</span>
      <svg viewBox="716 40 216 44" className="ml-auto h-11 w-[216px]" fill="#d6d7d9" aria-hidden="true">
        <circle cx="735.500" cy="63.500" r="16.200" />
        <path d="M735.500 54 v10 l-4.500 5" stroke="#262c39" strokeWidth="2.600" fill="none" strokeLinecap="round" />
        <path d="M718 54 a9 9 0 0 1 11 -9.500 q-6 3 -11 9.500z M753 54 a9 9 0 0 0 -11 -9.500 q6 3 11 9.500z" stroke="#d6d7d9" strokeWidth="1.500" strokeLinejoin="round" />
        <path d="M724 80.500 l4-4 M747 80.500 l-4-4" stroke="#d6d7d9" strokeWidth="3.500" strokeLinecap="round" />
        <text x="773" y="60" fontSize="22" fontWeight="700" fontFamily="Roboto, sans-serif">Vo</text>
        <text x="772" y="80" fontSize="22" fontWeight="700" fontFamily="Roboto, sans-serif">LTE</text>
        <path d="M829 44 l5 6 h-10z M829 58.500 l5-6 h-10z" />
        <text x="838" y="59" fontSize="20" fontWeight="700" fontFamily="Roboto, sans-serif">5G</text>
        <rect x="845" y="66" width="7.500" height="14" rx="1.500" />
        <rect x="857.500" y="62" width="7.500" height="18" rx="1.500" />
        <rect x="870" y="53" width="7.500" height="27" rx="1.500" />
        <rect x="883" y="44" width="7.500" height="36" rx="1.500" />
        <path d="M907 66 V49 q0-4 4-4 h4 q0-3 4-3 t4 3 h4 q4 0 4 4 V66z" fill="#686d76" />
        <path d="M907 66 h24 V76 q0 4 -4 4 h-16 q-4 0 -4 -4z" fill="#e6a200" />
      </svg>
      <span className="ml-1.5 font-[Inter,sans-serif] text-4xl leading-[44px] font-semibold">36%</span>
    </div>
  );
}

function Header() {
  return (
    <header className="relative z-10 shrink-0 bg-[#262c39] pb-5">
      <StatusBar />
      <div className="mt-[45px] flex items-center pr-[49px] pl-[53px]">
        <button type="button" aria-label="Back" className="size-[60px]">
          <svg viewBox="0 0 60 60" className="size-full" fill="none" stroke="#fff" strokeWidth="5.500" strokeLinecap="round" strokeLinejoin="round">
            <path d="M51 29 H9 M28.500 9.500 L9 29 L28.500 48.500" />
          </svg>
        </button>
        <div className="ml-[79px] grid size-[126px] place-items-center rounded-full bg-linear-to-b from-[#5eacfa] to-[#4089cd] text-[44px] font-medium text-white">
          P
        </div>
        <div className="ml-9 min-w-0 flex-1">
          <h1 className="truncate text-[54px] leading-[62px] font-medium text-white">Panic_reminder</h1>
          <p className="text-[43px] leading-[56px] text-[#7d8b99]">bot</p>
        </div>
        <button type="button" aria-label="More options" className="h-[60px] w-12">
          <svg viewBox="0 0 48 60" className="size-full" fill="#fff">
            <circle cx="25" cy="11" r="6" />
            <circle cx="25" cy="29" r="6" />
            <circle cx="25" cy="47" r="6" />
          </svg>
        </button>
      </div>
    </header>
  );
}

function Composer() {
  return (
    <footer className="shrink-0">
      <form className="flex h-[148px] items-center bg-[#212c39] pr-9 pl-[41px]" onSubmit={(e) => e.preventDefault()}>
        <button type="button" aria-label="Emoji" className="size-20">
          <svg viewBox="0 0 80 80" className="size-full" fill="none" stroke="#758494" strokeWidth="5.500" strokeLinecap="round">
            <circle cx="40" cy="42" r="32.500" />
            <path d="M26.500 50 Q31 57.500 40 57.500 T53.500 50" />
            <ellipse cx="29" cy="35.500" rx="4" ry="5.500" fill="#758494" stroke="none" />
            <ellipse cx="51" cy="35.500" rx="4" ry="5.500" fill="#758494" stroke="none" />
          </svg>
        </button>
        <span className="mt-0.5 ml-[29px] h-[72px] w-1.5 shrink-0 bg-[#56a0dc]" aria-hidden="true" />
        <input
          type="text"
          aria-label="Message"
          placeholder="Message"
          className="mt-1 -ml-1 h-[72px] min-w-0 flex-1 bg-transparent text-[54px] text-white outline-none placeholder:text-[#738393]"
        />
        <button type="button" aria-label="Attach file" className="h-20 w-[70px]">
          <svg viewBox="0 0 70 80" className="size-full" fill="none" stroke="#7a8897" strokeWidth="5" strokeLinecap="round" strokeLinejoin="round">
            <path d="M8.900 31 L23.900 16.400 A22 22 0 0 1 55.100 47.600 L34 69 A15.500 15.500 0 0 1 12 47 L33.100 26.600 A9 9 0 0 1 45.900 39.400 L27 56.500" />
          </svg>
        </button>
        <button type="button" aria-label="Record voice message" className="ml-[72px] h-20 w-[72px]">
          <svg viewBox="972 2238 72 80" className="size-full" fill="none" stroke="#7a8897" strokeWidth="5" strokeLinecap="round">
            <rect x="995.500" y="2245" width="25" height="47" rx="12.500" />
            <path d="M984 2280.500 a24 24 0 0 0 48 0" />
            <path d="M1008 2306 v8" strokeWidth="6" />
          </svg>
        </button>
      </form>
      <div className="grid h-12 justify-center bg-[#161c26] pt-[15px]">
        <div className="h-3 w-[360px] rounded-full bg-[#8b8f92]" />
      </div>
    </footer>
  );
}

export default function App() {
  return (
    <div className="flex h-screen flex-col overflow-hidden bg-[#111822] font-[Roboto,sans-serif]">
      <EmojiDefs />
      <Header />
      <main className="relative flex min-h-0 flex-1 flex-col justify-end overflow-hidden bg-[radial-gradient(ellipse_at_0%_0%,#0e151b_0%,transparent_45%),radial-gradient(ellipse_at_100%_20%,#131929_0%,transparent_60%),radial-gradient(ellipse_at_0%_90%,#172632_0%,transparent_60%),radial-gradient(ellipse_at_100%_100%,#0c1218_0%,transparent_50%)] pb-[15px] pl-[33px]">
        <Doodles />
        <ol className="relative flex flex-col gap-1.5">
          <ScrolledBubble time="01:16" />
          {messages.map((message, index) => (
            <Bubble key={index} message={message} />
          ))}
        </ol>
      </main>
      <Composer />
    </div>
  );
}
